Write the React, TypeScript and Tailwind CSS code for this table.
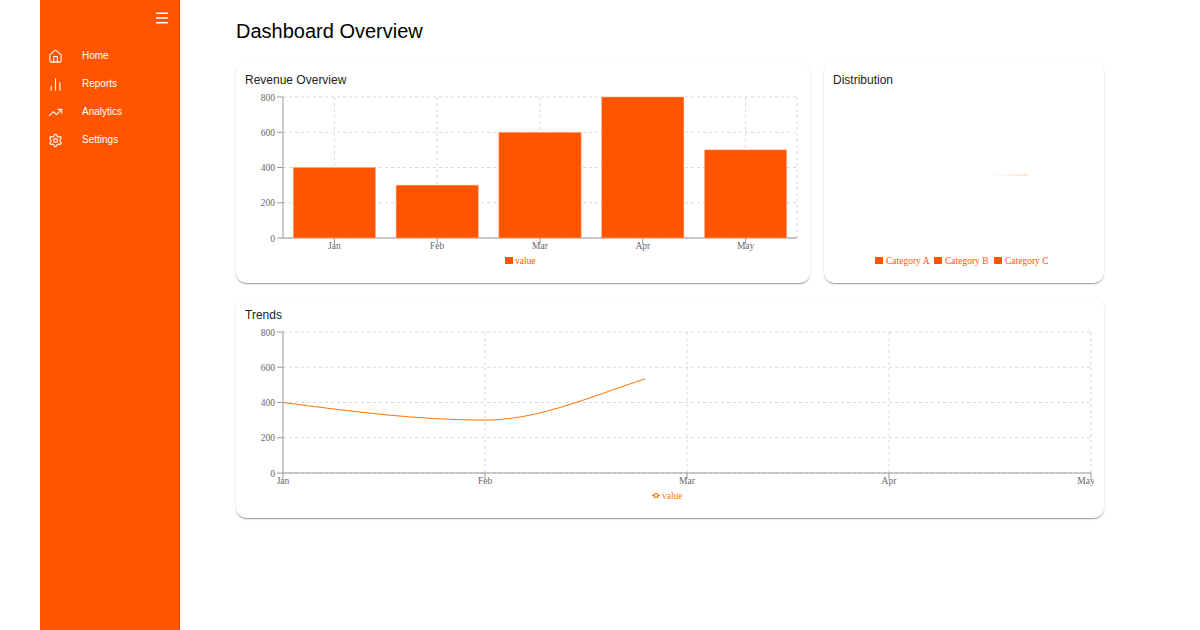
import React from "react";
import { House, ChartNoAxesColumn, TrendingUp, Settings, Menu } from "lucide-react";

const ORANGE = "#ff5500";
const LINE = "#ff7300";

const navItems = [
  { label: "Home", icon: House },
  { label: "Reports", icon: ChartNoAxesColumn },
  { label: "Analytics", icon: TrendingUp },
  { label: "Settings", icon: Settings },
];

const revenue = [
  { name: "Jan", value: 400 },
  { name: "Feb", value: 300 },
  { name: "Mar", value: 600 },
  { name: "Apr", value: 800 },
  { name: "May", value: 500 },
];

const TOP = 9;
const BOTTOM = 150;
const AXIS_X = 37;
const FS = 9.5;
const GRID = "#d9d9d9";
const yFor = (v: number) => BOTTOM - (v / 800) * (BOTTOM - TOP);
const yTicks = [0, 200, 400, 600, 800];

function YAxis({ right }: { right: number }) {
  return (
    <g>
      {yTicks.map((t) => (
        <line key={`g${t}`} x1={AXIS_X} x2={right} y1={yFor(t)} y2={yFor(t)} stroke={GRID} strokeDasharray="3 3" />
      ))}
      <line x1={AXIS_X} x2={AXIS_X} y1={TOP} y2={BOTTOM} stroke="#999" />
      <line x1={AXIS_X} x2={right} y1={BOTTOM} y2={BOTTOM} stroke="#999" />
      {yTicks.map((t) => (
        <g key={`t${t}`}>
          <line x1={AXIS_X - 6} x2={AXIS_X} y1={yFor(t)} y2={yFor(t)} stroke="#999" />
          <text x={AXIS_X - 8} y={yFor(t) + 3.5} textAnchor="end" fontSize={FS} fill="#666">
            {t}
          </text>
        </g>
      ))}
    </g>
  );
}

function RevenueChart() {
  const right = 551;
  const band = (right - AXIS_X) / revenue.length;
  return (
    <svg width={554} height={185} className="block" style={{ fontFamily: '"Liberation Serif", serif' }}>
      {revenue.map((d, i) => (
        <line key={d.name} x1={AXIS_X + band * (i + 0.5)} x2={AXIS_X + band * (i + 0.5)} y1={TOP} y2={BOTTOM} stroke={GRID} strokeDasharray="3 3" />
      ))}
      <line x1={right} x2={right} y1={TOP} y2={BOTTOM} stroke={GRID} strokeDasharray="3 3" />
      <YAxis right={right} />
      {revenue.map((d, i) => (
        <rect
          key={`b${d.name}`}
          x={AXIS_X + band * i + band * 0.1}
          y={yFor(d.value)}
          width={band * 0.8}
          height={BOTTOM - yFor(d.value)}
          fill={ORANGE}
          stroke="#ffb08a"
          strokeWidth={0.5}
        />
      ))}
      {revenue.map((d, i) => (
        <g key={`x${d.name}`}>
          <line x1={AXIS_X + band * (i + 0.5)} x2={AXIS_X + band * (i + 0.5)} y1={BOTTOM} y2={BOTTOM + 6} stroke="#999" />
          <text x={AXIS_X + band * (i + 0.5)} y={BOTTOM + 11} textAnchor="middle" fontSize={FS} fill="#666">
            {d.name}
          </text>
        </g>
      ))}
      <rect x={259} y={169} width={8} height={7} fill={ORANGE} />
      <text x={269} y={176} fontSize={FS} fill={ORANGE}>
        value
      </text>
    </svg>
  );
}

function DistributionChart() {
  const items = [
    { label: "Category A", x: 41 },
    { label: "Category B", x: 100 },
    { label: "Category C", x: 160 },
  ];
  return (
    <svg width={260} height={185} className="block" style={{ fontFamily: '"Liberation Serif", serif' }}>
      <defs>
        <linearGradient id="sliver" x1="0" x2="1" y1="0" y2="0">
          <stop offset="0" stopColor="#ffe8da" stopOpacity={0} />
          <stop offset="1" stopColor="#fbc9a8" />
        </linearGradient>
      </defs>
      <path d="M149 87.5 Q175 86 194 86.6 L194 87.6 Q175 87.6 149 87.8 Z" fill="url(#sliver)" />
      {items.map((it) => (
        <g key={it.label}>
          <rect x={it.x} y={169} width={8} height={7} fill={ORANGE} />
          <text x={it.x + 11} y={176} fontSize={FS} fill={ORANGE}>
            {it.label}
          </text>
        </g>
      ))}
    </svg>
  );
}

function TrendsChart() {
  const right = 845;
  const step = (right - AXIS_X) / 4;
  return (
    <svg width={848} height={185} className="block" style={{ fontFamily: '"Liberation Serif", serif' }}>
      <defs>
        <clipPath id="reveal">
          <rect x={0} y={0} width={399} height={185} />
        </clipPath>
      </defs>
      {revenue.slice(1).map((d, i) => (
        <line key={d.name} x1={AXIS_X + step * (i + 1)} x2={AXIS_X + step * (i + 1)} y1={TOP} y2={BOTTOM} stroke={GRID} strokeDasharray="3 3" />
      ))}
      <YAxis right={right} />
      <path
        d="M37 79.5 C104.33 88.3 171.67 97.125 239 97.125 C306.33 97.125 373.67 58.93 441 44.25"
        fill="none"
        stroke={LINE}
        strokeWidth={1}
        clipPath="url(#reveal)"
      />
      {revenue.map((d, i) => (
        <g key={`x${d.name}`}>
          <line x1={AXIS_X + step * i} x2={AXIS_X + step * i} y1={BOTTOM} y2={BOTTOM + 6} stroke="#999" />
          <text x={i === 4 ? 840 : AXIS_X + step * i} y={BOTTOM + 11} textAnchor="middle" fontSize={FS} fill="#666">
            {d.name}
          </text>
        </g>
      ))}
      <line x1={406} x2={414} y1={172.5} y2={172.5} stroke={LINE} strokeWidth={1.2} />
      <circle cx={410} cy={172.5} r={2} fill="#fff" stroke={LINE} strokeWidth={1.2} />
      <text x={416} y={176} fontSize={FS} fill={LINE}>
        value
      </text>
    </svg>
  );
}

function Card({ title, children }: { title: string; children: React.ReactNode }) {
  return (
    <div className="bg-white rounded-[10px] pt-[11px] pl-[9px] pr-[11px] h-[221px] shadow-[0_2px_1px_-1px_rgba(0,0,0,0.2),0_1px_1px_0_rgba(0,0,0,0.14),0_1px_3px_0_rgba(0,0,0,0.12)]">
      <h2 className="text-[12px] leading-[15px] text-[#222] font-normal">{title}</h2>
      <div className="pl-[1px]">{children}</div>
    </div>
  );
}

export default function App() {
  return (
    <div className="flex h-[630px] w-[1200px] bg-white overflow-hidden" style={{ fontFamily: '"Liberation Sans", Arial, sans-serif' }}>
      <div className="w-[40px] shrink-0" />
      <aside className="w-[140px] shrink-0 h-full bg-[#ff5500] border-r border-[#e24b00] text-white">
        <div className="h-[42px] flex justify-end pr-[9px] pt-[10px]">
          <Menu size={16} strokeWidth={2.2} />
        </div>
        <nav className="flex flex-col">
          {navItems.map(({ label, icon: Icon }) => (
            <div key={label} className="h-[28px] flex items-center pl-[8px]">
              <Icon size={15} strokeWidth={1.7} className="shrink-0" />
              <span className="ml-[19px] text-[10px] leading-none">{label}</span>
            </div>
          ))}
        </nav>
      </aside>
      <main className="pl-[56px] pt-[19px]">
        <h1 className="text-[20px] leading-[24px] text-black font-normal mb-[19px]">Dashboard Overview</h1>
        <div className="w-[868px] flex flex-col gap-[14px]">
          <div className="grid grid-cols-[574px_280px] gap-[14px]">
            <Card title="Revenue Overview">
              <RevenueChart />
            </Card>
            <Card title="Distribution">
              <DistributionChart />
            </Card>
          </div>
          <Card title="Trends">
            <TrendsChart />
          </Card>
        </div>
      </main>
    </div>
  );
}
